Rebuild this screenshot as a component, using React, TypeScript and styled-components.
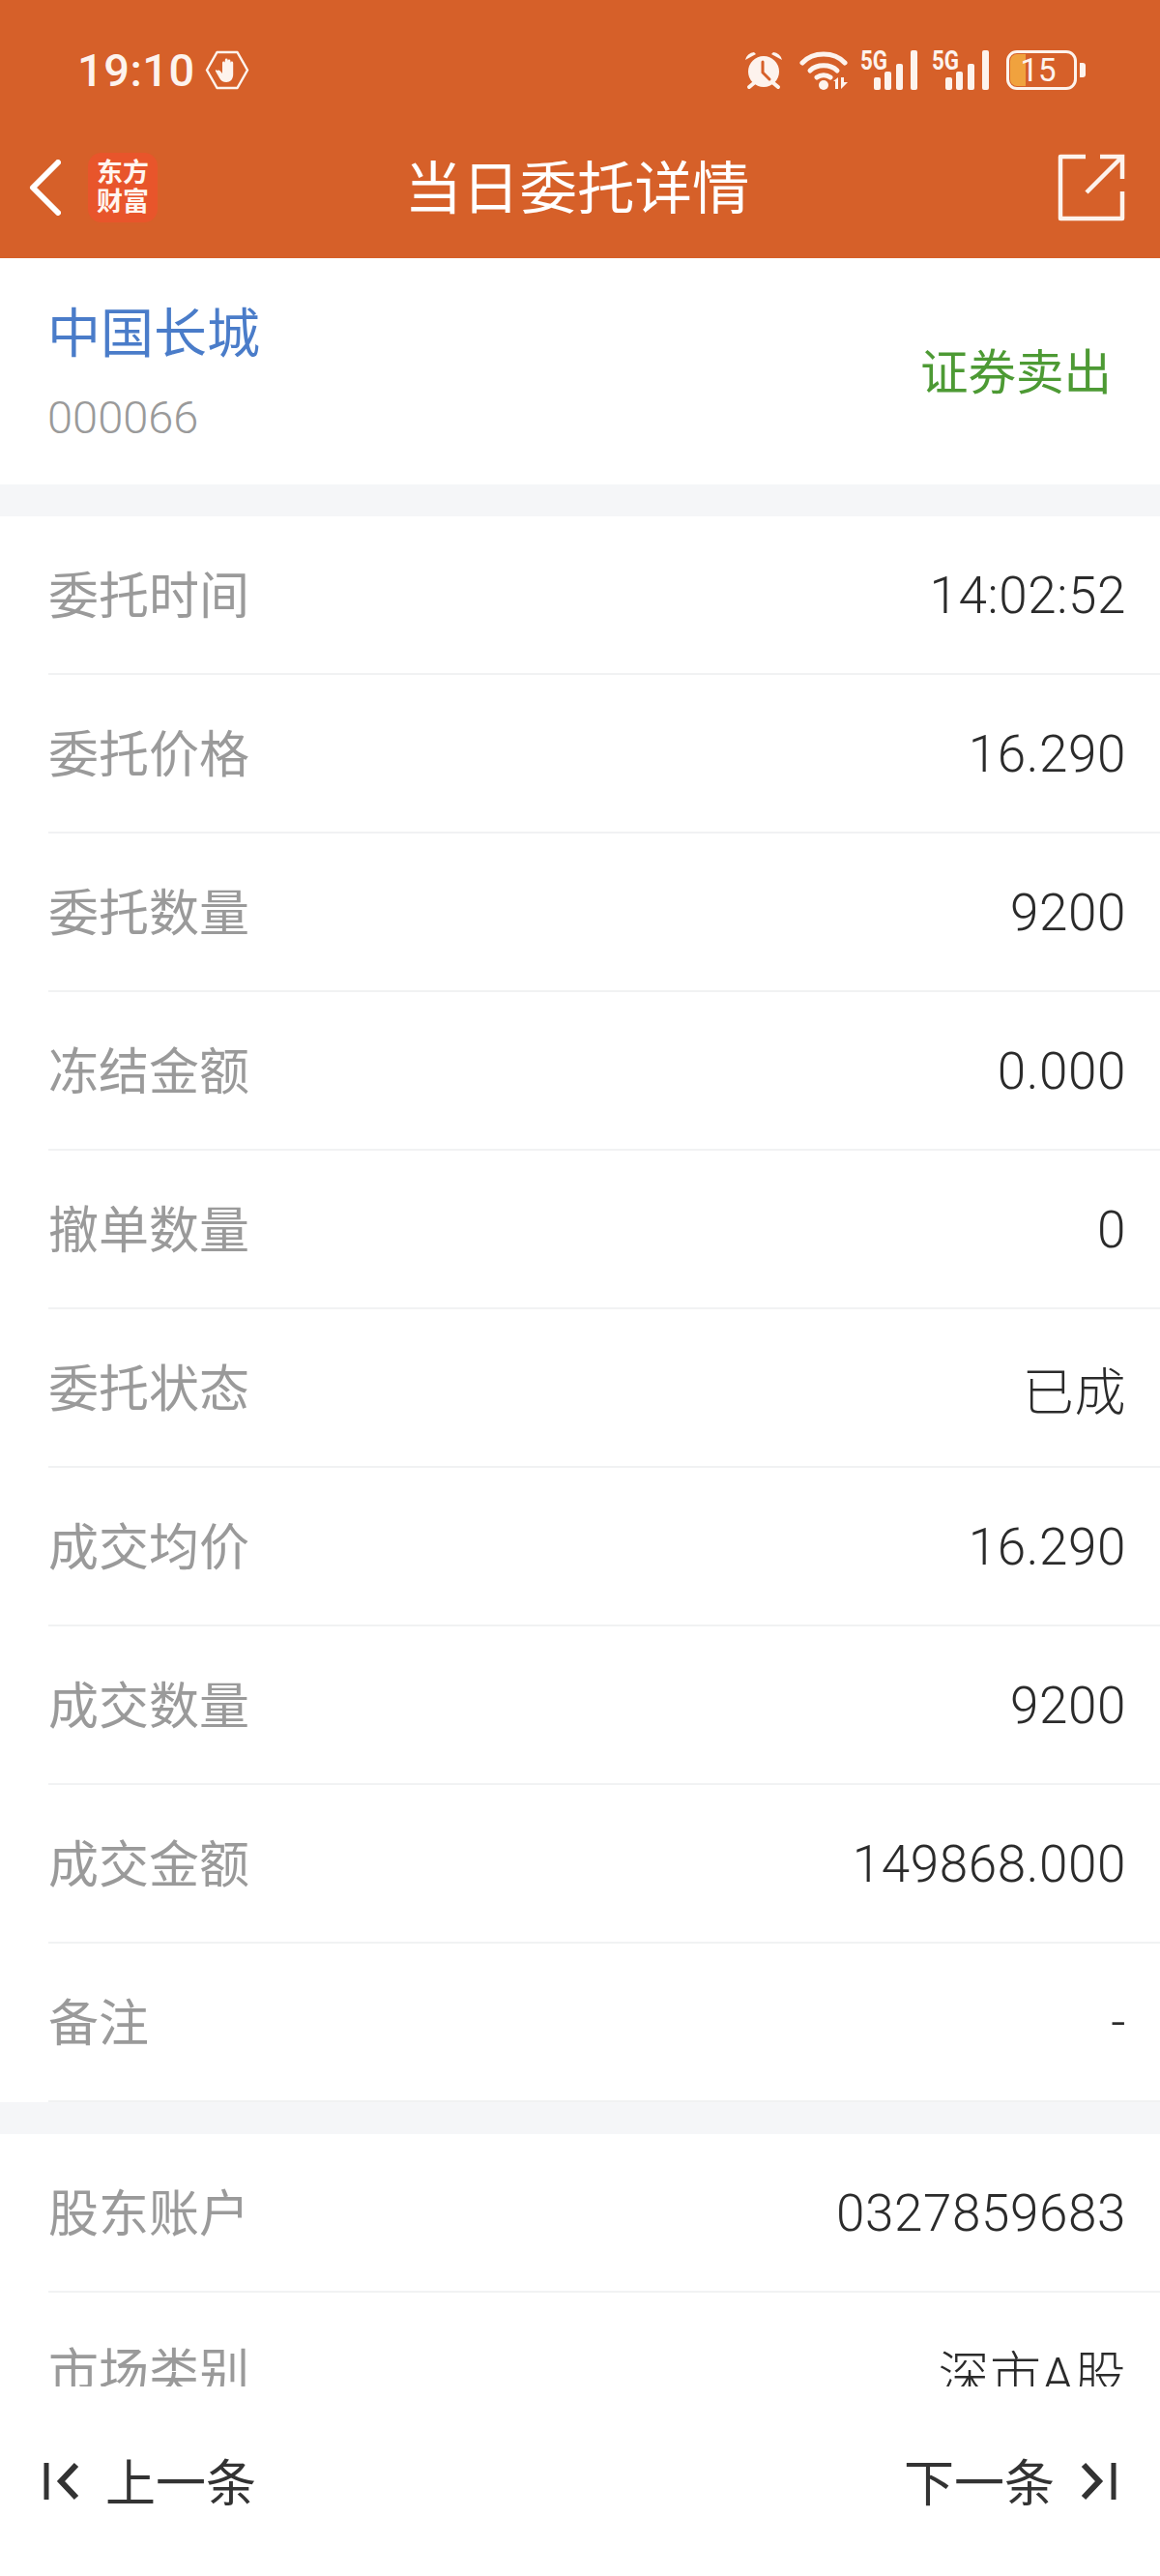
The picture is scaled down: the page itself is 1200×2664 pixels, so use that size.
import React from "react";
import styled, { createGlobalStyle } from "styled-components";

const GlobalStyle = createGlobalStyle`
  html, body {
    margin: 0;
    padding: 0;
    background: #ffffff;
  }
`;

const FONT = `Roboto, "Noto Sans CJK SC", sans-serif`;

const Page = styled.div`
  width: 1200px;
  height: 2664px;
  display: flex;
  flex-direction: column;
  overflow: hidden;
  font-family: ${FONT};
  background: #ffffff;
`;

const Header = styled.header`
  flex: none;
  height: 267px;
  background: #d66029;
  color: #fdf3ed;
`;

const StatusBar = styled.div`
  height: 120px;
  box-sizing: border-box;
  padding: 52px 86px 0 80px;
  display: flex;
  align-items: flex-start;
`;

const Clock = styled.span`
  font-size: 47px;
  font-weight: 500;
  line-height: 41px;
  letter-spacing: 0.5px;
`;

const HandBadge = styled.svg`
  margin-left: 10px;
  width: 46px;
  height: 41px;
`;

const StatusIcons = styled.div`
  margin-left: auto;
  display: flex;
  gap: 12px;
`;

const Battery = styled.div`
  position: relative;
  width: 73px;
  height: 41px;
  margin-left: 3px;
  box-sizing: border-box;
  border: 3px solid #fdf3ed;
  border-radius: 11px;
  display: flex;
  align-items: center;
  justify-content: center;
  font-size: 33px;
  line-height: 1;
`;

const BatteryFill = styled.span`
  position: absolute;
  left: 1px;
  top: 1px;
  bottom: 1px;
  width: 16px;
  background: #f0a23e;
  border-radius: 7px 0 0 7px;
`;

const BatteryLevel = styled.span`
  position: relative;
  margin-right: 7px;
`;

const BatteryNub = styled.span`
  position: absolute;
  right: -12px;
  top: 10px;
  width: 6px;
  height: 15px;
  background: #fdf3ed;
  border-radius: 0 3px 3px 0;
`;

const NavBar = styled.nav`
  height: 147px;
  padding: 0 36px 0 30px;
  display: grid;
  grid-template-columns: 1fr auto 1fr;
  align-items: center;
`;

const NavLeft = styled.div`
  display: flex;
  align-items: center;
  gap: 28px;
`;

const Logo = styled.div`
  width: 72px;
  height: 72px;
  border-radius: 14px;
  background: #e8552b;
  color: #fff5ef;
  font-size: 27px;
  font-weight: 700;
  line-height: 30px;
  text-align: center;
  display: flex;
  flex-direction: column;
  justify-content: center;
`;

const Title = styled.h1`
  margin: 6px 0 0;
  font-size: 59.5px;
  font-weight: 400;
  line-height: 1;
  color: #ffffff;
`;

const ShareButton = styled.svg`
  justify-self: end;
  width: 70px;
  height: 70px;
`;

const Scroller = styled.main`
  flex: 1;
  min-height: 0;
  overflow: hidden;
`;

const StockCard = styled.section`
  height: 234px;
  box-sizing: border-box;
  padding: 8px 50px 0 49px;
  display: flex;
  align-items: center;
  justify-content: space-between;
`;

const StockName = styled.div`
  padding-top: 3px;
  font-size: 55px;
  line-height: 85px;
  color: #4a7cc9;
`;

const StockCode = styled.div`
  font-size: 47px;
  line-height: 88px;
  font-weight: 300;
  color: #9a9a9a;
`;

const Direction = styled.div`
  margin-top: -14px;
  font-size: 49.5px;
  color: #4d9a34;
`;

const Gap = styled.div`
  height: 33px;
  background: #f5f6f8;
`;

const Row = styled.div`
  height: 164px;
  box-sizing: border-box;
  margin-left: 50px;
  padding: 0 35px 2px 0;
  border-bottom: 2px solid #f1f2f3;
  display: flex;
  align-items: center;
  justify-content: space-between;
`;

const Label = styled.span`
  margin-top: -3px;
  font-size: 52px;
  color: #9a9a9a;
`;

const Value = styled.span`
  margin-top: 3px;
  font-size: 53px;
  letter-spacing: 0.6px;
  color: #2b2b2b;
  font-weight: 300;
`;

const Footer = styled.footer`
  flex: none;
  height: 196px;
  box-sizing: border-box;
  padding: 0 45px 4px;
  background: #ffffff;
  display: flex;
  align-items: center;
  justify-content: space-between;
`;

const Pager = styled.button`
  padding: 0;
  border: none;
  background: none;
  display: flex;
  align-items: center;
  gap: 26px;
  font-family: inherit;
  font-size: 52px;
  color: #333333;
`;

const PagerIcon = styled.svg`
  margin-top: 3px;
  width: 38px;
  height: 40px;
`;

const SignalIcon = styled.svg`
  overflow: visible;
`;

const Signal = () => (
  <SignalIcon width="62" height="41" viewBox="0 0 62 41">
    <text x="0" y="20" fontFamily="Roboto, sans-serif" fontSize="28" fontWeight="700" fill="#fdf3ed" textLength="28" lengthAdjust="spacingAndGlyphs">
      5G
    </text>
    <g fill="#fdf3ed">
      <rect x="14" y="28" width="7" height="13" rx="2" />
      <rect x="25" y="22" width="7" height="19" rx="2" />
      <rect x="37" y="14" width="7" height="27" rx="2" />
      <rect x="52" y="0" width="7" height="41" rx="2" />
    </g>
  </SignalIcon>
);

const firstGroup: [string, string][] = [
  ["委托时间", "14:02:52"],
  ["委托价格", "16.290"],
  ["委托数量", "9200"],
  ["冻结金额", "0.000"],
  ["撤单数量", "0"],
  ["委托状态", "已成"],
  ["成交均价", "16.290"],
  ["成交数量", "9200"],
  ["成交金额", "149868.000"],
  ["备注", "-"],
];

const secondGroup: [string, string][] = [
  ["股东账户", "0327859683"],
  ["市场类别", "深市A股"],
];

const renderRows = (rows: [string, string][]) =>
  rows.map(([label, value]) => (
    <Row key={label}>
      <Label>{label}</Label>
      <Value>{value}</Value>
    </Row>
  ));

export default function App() {
  return (
    <Page>
      <GlobalStyle />
      <Header>
        <StatusBar>
          <Clock>19:10</Clock>
          <HandBadge viewBox="0 0 46 41">
            <path d="M12.5 2 H33.5 L44 20.5 L33.5 39 H12.5 L2 20.5 Z" fill="none" stroke="#fdf3ed" strokeWidth="2.5" strokeLinejoin="round" />
            <path
              d="M12.5 21 c1 -1 2.5 -.5 3.5 .5 l2 2.5 v-11 a1.4 1.4 0 0 1 2.8 0 v6 v-9 a1.4 1.4 0 0 1 2.8 0 v9 v-8 a1.4 1.4 0 0 1 2.8 0 v8 v-6 a1.4 1.4 0 0 1 2.8 0 v12 c0 5 -3 8 -7 8 c-3.500 0 -5.500 -1.500 -7 -4 l-4 -7 c-.4 -.8 -.4 -1.500 .3 -2 z"
              fill="#fdf3ed"
            />
          </HandBadge>
          <StatusIcons>
            <svg width="45" height="41" viewBox="0 0 45 41">
              <circle cx="20" cy="22" r="16" fill="#fdf3ed" />
              <path d="M1 10 a10 10 0 0 1 9 -8 l2 2 z M39 10 a10 10 0 0 0 -9 -8 l-2 2 z" fill="#fdf3ed" />
              <path d="M5 38 l6 -5 M35 38 l-6 -5" stroke="#fdf3ed" strokeWidth="4" strokeLinecap="round" />
              <path d="M19 12 v11 l7 7" fill="none" stroke="#d66029" strokeWidth="3" strokeLinecap="round" />
            </svg>
            <svg width="51" height="41" viewBox="0 0 51 41">
              <g fill="none" stroke="#fdf3ed" strokeWidth="5" strokeLinecap="round">
                <path d="M3 13 C14 1 36 1 47 13" />
                <path d="M11 21 C18 14 32 14 39 21" />
                <path d="M18 28 C22 25 28 25 32 28" />
              </g>
              <circle cx="25" cy="36" r="5" fill="#fdf3ed" />
              <path d="M35 32 l5 -4 v12 h-3 v-8 z M43 28 h3 v5 h4 l-7 7 z" fill="#fdf3ed" />
            </svg>
            <Signal />
            <Signal />
            <Battery>
              <BatteryFill />
              <BatteryLevel>15</BatteryLevel>
              <BatteryNub />
            </Battery>
          </StatusIcons>
        </StatusBar>
        <NavBar>
          <NavLeft>
            <svg width="33" height="58" viewBox="0 0 33 58">
              <path d="M30 3 L4 29 L30 55" fill="none" stroke="#ffffff" strokeWidth="6" strokeLinecap="round" strokeLinejoin="round" />
            </svg>
            <Logo>
              <span>东方</span>
              <span>财富</span>
            </Logo>
          </NavLeft>
          <Title>当日委托详情</Title>
          <ShareButton viewBox="0 0 70 70">
            <path d="M29 3 H3 V67 H67 V39" fill="none" stroke="#fdf3ed" strokeWidth="4.5" strokeLinejoin="round" />
            <path d="M30 40 L67 3 M44 3 H67 V26" fill="none" stroke="#fdf3ed" strokeWidth="4.5" />
          </ShareButton>
        </NavBar>
      </Header>
      <Scroller>
        <StockCard>
          <div>
            <StockName>中国长城</StockName>
            <StockCode>000066</StockCode>
          </div>
          <Direction>证券卖出</Direction>
        </StockCard>
        <Gap />
        {renderRows(firstGroup)}
        <Gap />
        {renderRows(secondGroup)}
      </Scroller>
      <Footer>
        <Pager>
          <PagerIcon viewBox="0 0 38 40">
            <path d="M3 1 V39" stroke="#333" strokeWidth="5" />
            <path d="M34 3 L18 20 L34 37" fill="none" stroke="#333" strokeWidth="6" />
          </PagerIcon>
          上一条
        </Pager>
        <Pager>
          下一条
          <PagerIcon viewBox="0 0 38 40">
            <path d="M35 1 V39" stroke="#333" strokeWidth="5" />
            <path d="M4 3 L20 20 L4 37" fill="none" stroke="#333" strokeWidth="6" />
          </PagerIcon>
        </Pager>
      </Footer>
    </Page>
  );
}
